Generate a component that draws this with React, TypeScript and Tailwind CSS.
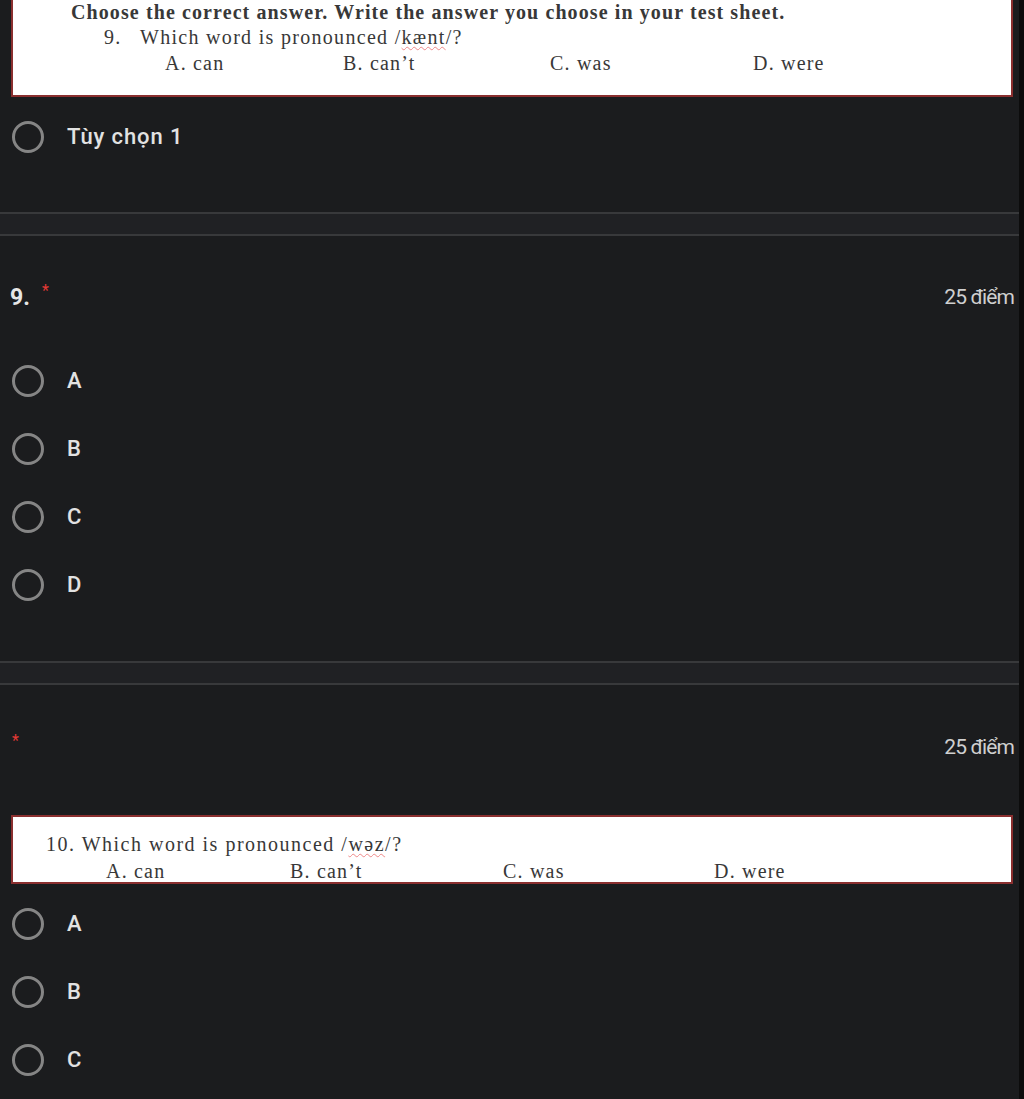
import React from "react";

const serif = { fontFamily: '"Liberation Serif", "Times New Roman", serif' };

function Radio({ label, className = "" }: { label: string; className?: string }) {
    return (
        <div className={`flex items-center h-[32px] ${className}`}>
            <span className="ml-[12px] w-[32px] h-[32px] rounded-full border-[3px] border-[#858585] shrink-0" />
            <span className="ml-[23px] text-[22px] font-medium text-[#e2e2e2] leading-none tracking-[0.9px]">{label}</span>
        </div>
    );
}

function Separator() {
    return <div className="h-[24px] border-y-2 border-[#38393b] bg-[#202124]" />;
}

function Points() {
    return <span className="text-[21px] text-[#cfcfcf] tracking-[-0.9px] leading-none mr-[5px]">25 điểm</span>;
}

export default function App() {
    return (
        <div
            className="w-[1024px] h-[1099px] overflow-hidden bg-[#1b1c1e] flex"
            style={{ fontFamily: 'Roboto, "Noto Sans", sans-serif' }}
        >
            <div className="w-[1019px] flex flex-col">
                {/* pasted image of question 9 */}
                <div className="ml-[11px] mr-[6px] h-[97px] bg-white border-2 border-t-0 border-[#8a2f2f] text-[#383838]" style={serif}>
                    <div className="pl-[58px] text-[20px] font-bold leading-none pt-[2px] tracking-[1.1px]">
                        Choose the correct answer. Write the answer you choose in your test sheet.
                    </div>
                    <div className="flex text-[20px] leading-none mt-[5px] tracking-[1.3px]">
                        <span className="pl-[91px] w-[127px]">9.</span>
                        <span>
                            Which word is pronounced /
                            <span className="underline decoration-wavy decoration-[#e88] decoration-1 underline-offset-2">kænt</span>
                            /?
                        </span>
                    </div>
                    <div className="flex text-[20px] leading-none mt-[6px] tracking-[1.2px]">
                        <span className="ml-[152px] w-[178px]">A. can</span>
                        <span className="w-[207px]">B. can’t</span>
                        <span className="w-[203px]">C. was</span>
                        <span>D. were</span>
                    </div>
                </div>

                <div className="h-[115px] pt-[24px]">
                    <Radio label="Tùy chọn 1" />
                </div>

                <Separator />

                {/* question 9 */}
                <div className="h-[425px] flex flex-col">
                    <div className="flex items-center justify-between mt-[41px] h-[40px]">
                        <div className="flex items-start ml-[10px]">
                            <span className="text-[23px] font-bold text-[#e6e6e6] leading-none">9.</span>
                            <span className="ml-[12px] -mt-[3px] text-[#e53935] text-[16px] leading-none">*</span>
                        </div>
                        <Points />
                    </div>
                    <div className="flex flex-col gap-[36px] mt-[48px]">
                        <Radio label="A" />
                        <Radio label="B" />
                        <Radio label="C" />
                        <Radio label="D" />
                    </div>
                </div>

                <Separator />

                {/* question 10 */}
                <div className="flex flex-col">
                    <div className="flex items-center justify-between mt-[44px] h-[36px]">
                        <span className="ml-[12px] -mt-[13px] text-[#e53935] text-[16px] leading-none">*</span>
                        <Points />
                    </div>
                    <div className="ml-[11px] mr-[6px] mt-[50px] h-[69px] bg-white border-2 border-[#8a2f2f] text-[#383838]" style={serif}>
                        <div className="pl-[33px] text-[20px] leading-none pt-[17px] tracking-[1.5px]">
                            10. Which word is pronounced /
                            <span className="underline decoration-wavy decoration-[#e88] decoration-1 underline-offset-2">wəz</span>
                            /?
                        </div>
                        <div className="flex text-[20px] leading-none mt-[7px] tracking-[1.2px]">
                            <span className="ml-[93px] w-[184px]">A. can</span>
                            <span className="w-[213px]">B. can’t</span>
                            <span className="w-[211px]">C. was</span>
                            <span>D. were</span>
                        </div>
                    </div>
                    <div className="flex flex-col gap-[36px] mt-[24px]">
                        <Radio label="A" />
                        <Radio label="B" />
                        <Radio label="C" />
                    </div>
                </div>
            </div>
            <div className="flex-1 bg-[#0c0c0c]" />
        </div>
    );
}
